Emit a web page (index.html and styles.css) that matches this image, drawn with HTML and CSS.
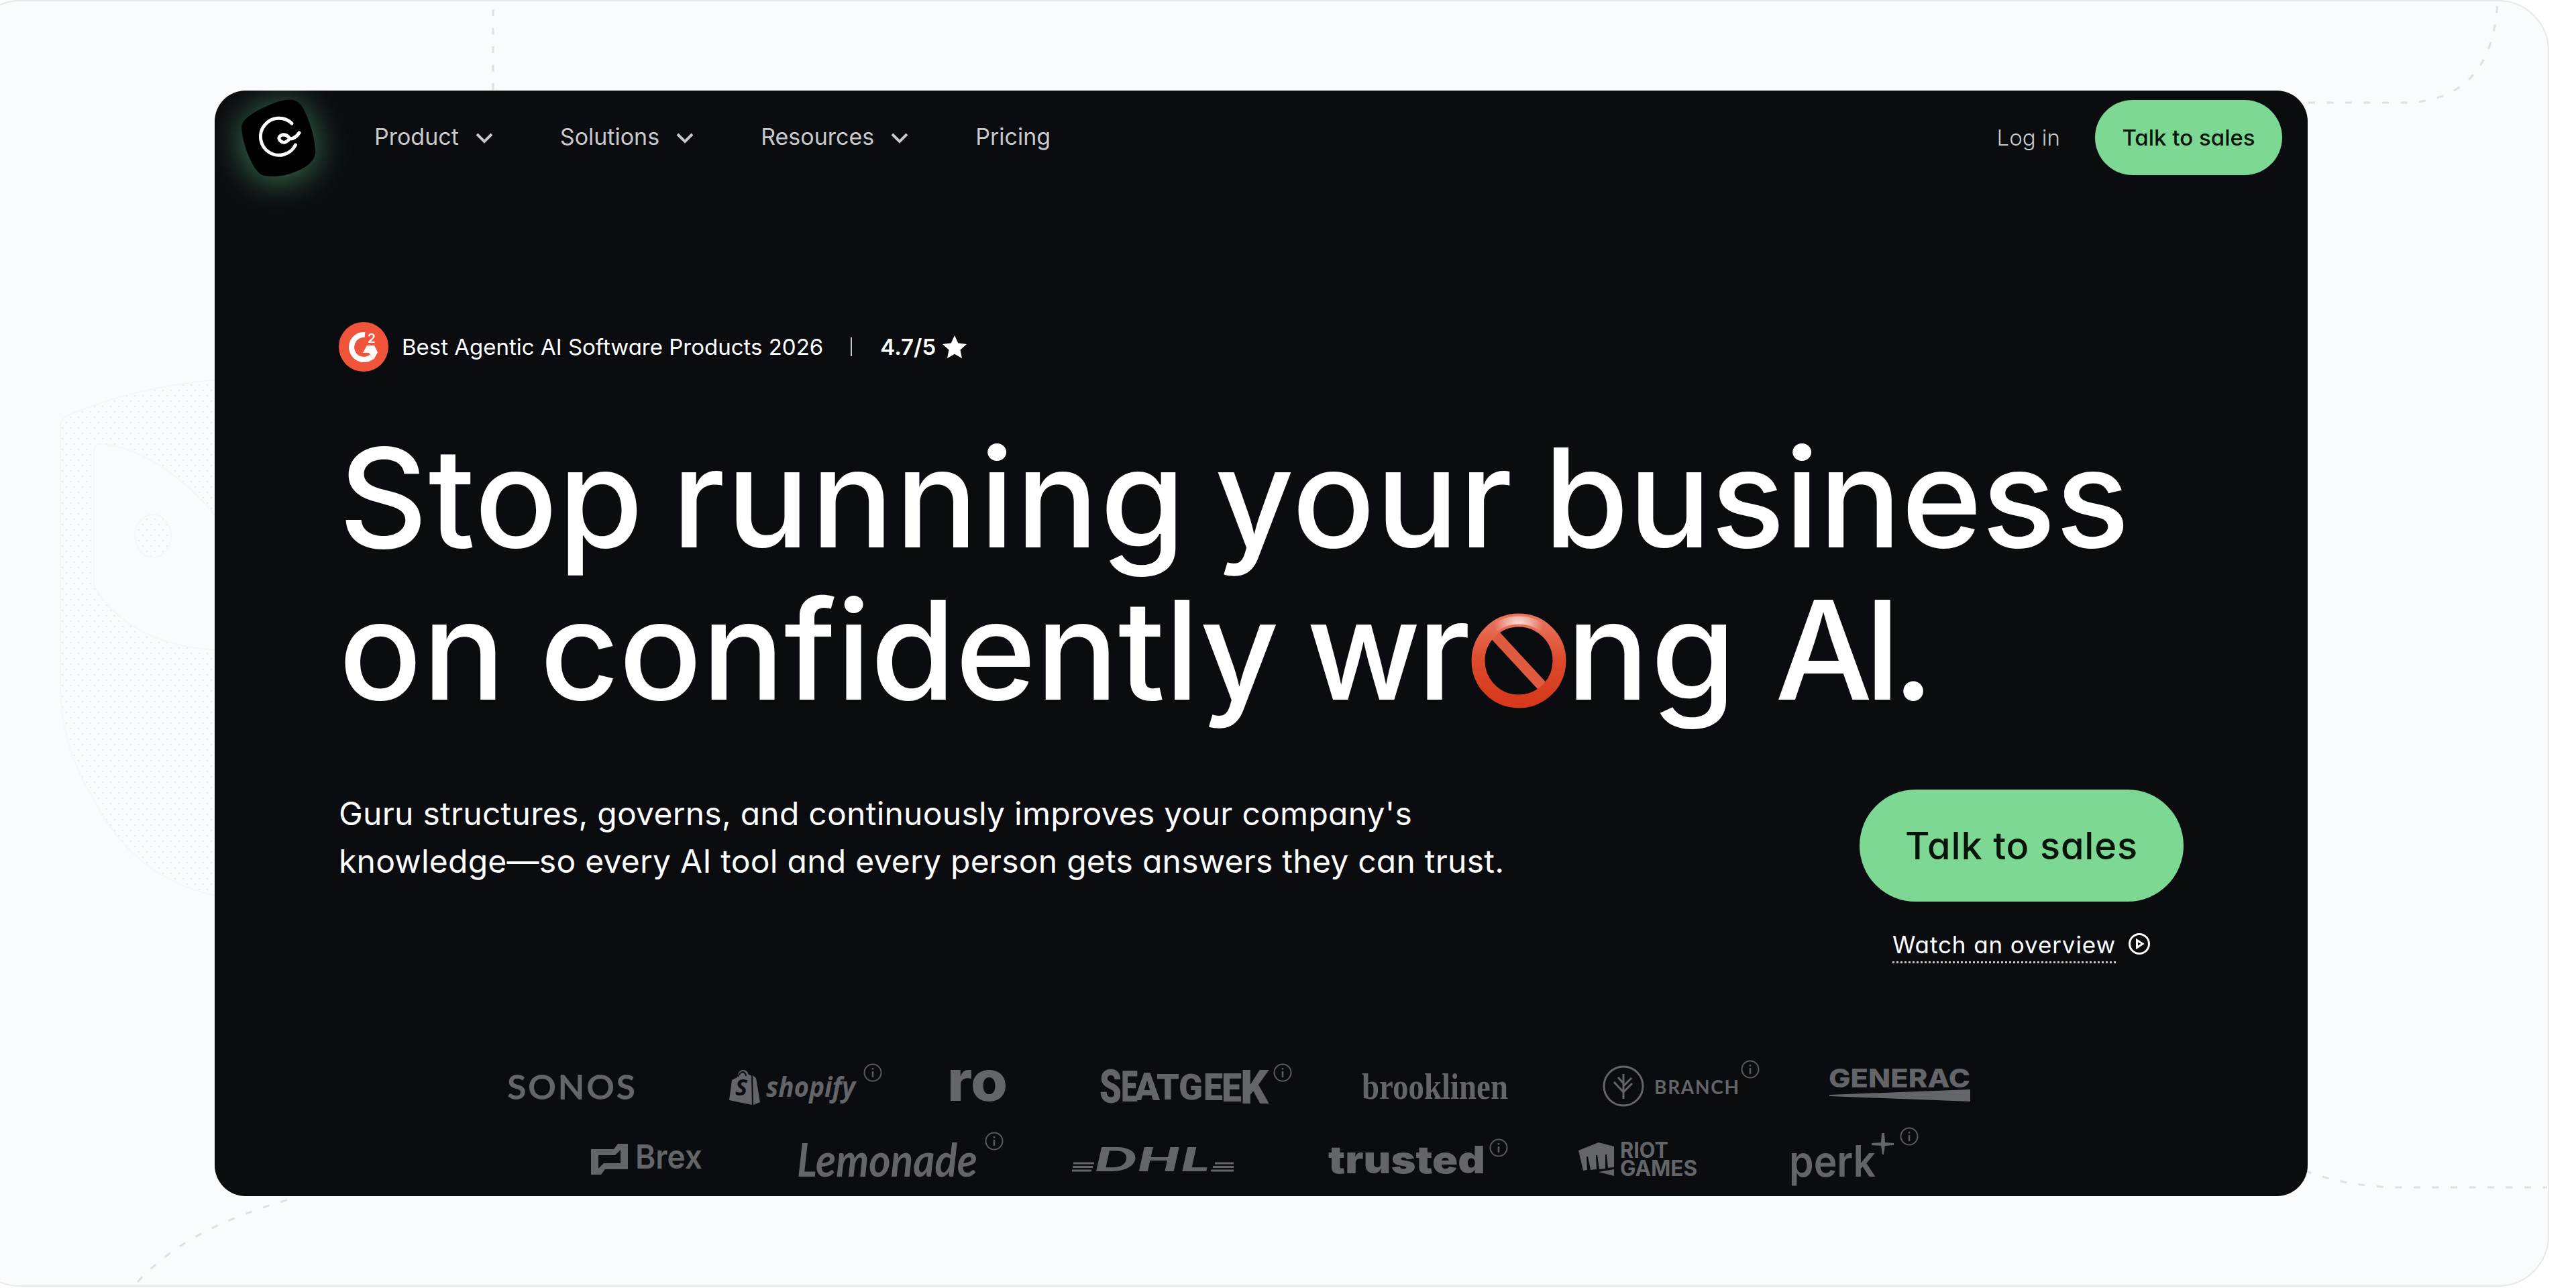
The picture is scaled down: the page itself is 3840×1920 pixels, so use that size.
FILE: index.html
```html
<!DOCTYPE html>
<html lang="en">
<head>
    <meta charset="utf-8">
    <title>Guru</title>
    <link rel="stylesheet" href="styles.css">
</head>
<body>
    <div class="frame">
        <svg class="backdrop" viewBox="0 0 3800 1916" fill="none">
            <defs>
                <pattern id="dots" width="12" height="16" patternUnits="userSpaceOnUse">
                    <circle cx="3" cy="4" r="1.4" fill="#e9ebeb" />
                    <circle cx="9" cy="12" r="1.4" fill="#e9ebeb" />
                </pattern>
            </defs>
            <path d="M90 632Q92 620 104 616Q210 572 330 564V780Q300 735 250 700Q200 664 150 660Q140 660 140 675V870Q190 960 330 968V1335Q200 1310 140 1190Q90 1110 90 1020Z" fill="url(#dots)" stroke="#f5f6f7" stroke-width="2" />
            <ellipse cx="228" cy="797" rx="27" ry="32" fill="url(#dots)" stroke="#f5f6f7" stroke-width="2" />
            <g class="dashes">
                <path d="M735 12V133" />
                <path d="M3441 151H3590Q3716 145 3723 0" />
                <path d="M205 1909C260 1850 330 1816 430 1786" />
                <path d="M3436 1743Q3500 1768 3580 1768H3797" />
            </g>
        </svg>
        <main class="card">
            <header class="nav">
                <svg class="brand" viewBox="0 0 112 116">
                    <path d="M46 8Q80-6 90 10C100 24 112 60 111 82Q108 98 84 108Q56 120 32 114C18 108 2 68 1 42Q2 26 46 8Z" fill="#000" />
                    <path d="M76 37A27.500 27.500 0 1 0 81.500 69M87 51Q81 60 73 60Q69 53 62 54Q56 56 57 60Q60 66 66 65Q71 63 73 59" fill="none" stroke="#fff" stroke-width="5" stroke-linecap="round" />
                </svg>
                <nav class="menu">
                    <a>Product<svg class="chevron" viewBox="0 0 28 20"><path d="M3 4L14 15L25 4" /></svg></a>
                    <a>Solutions<svg class="chevron" viewBox="0 0 28 20"><path d="M3 4L14 15L25 4" /></svg></a>
                    <a>Resources<svg class="chevron" viewBox="0 0 28 20"><path d="M3 4L14 15L25 4" /></svg></a>
                    <a>Pricing</a>
                </nav>
                <a class="login">Log in</a>
                <a class="button button-small">Talk to sales</a>
            </header>

            <section class="hero">
                <div class="award">
                    <svg class="g2" viewBox="0 0 74 74">
                        <circle cx="37" cy="37" r="37" fill="#f0553b" />
                        <path d="M39 19A18.500 18.500 0 1 0 49 52" fill="none" stroke="#fff" stroke-width="8" />
                        <path d="M42 35H53L58 45L52 56L45 46H36Z" fill="#fff" />
                        <text x="43" y="31" class="g2-two">2</text>
                    </svg>
                    <span>Best Agentic AI Software Products 2026</span>
                    <span class="divider"></span>
                    <strong>4.7/5</strong>
                    <svg class="star" viewBox="0 0 36 34"><path d="M18 0L23.300 11.500L36 13L26.500 21.500L29 34L18 27.800L7 34L9.500 21.500L0 13L12.700 11.500Z" fill="#fff" /></svg>
                </div>

                <h1>Stop <span class="loose">running</span> your <span class="tight nudge">business</span><br>on <span class="tight shift">confidently</span> <span class="tighter">wr</span><svg class="banned" viewBox="0 0 142 144">
                        <defs>
                            <linearGradient id="red" x1="0" y1="0" x2="0" y2="1">
                                <stop offset="0" stop-color="#e8735c" />
                                <stop offset=".5" stop-color="#dc4a2c" />
                                <stop offset="1" stop-color="#d8391c" />
                            </linearGradient>
                            <radialGradient id="shine" cx=".5" cy=".08" r=".3">
                                <stop offset="0" stop-color="#fff" stop-opacity=".85" />
                                <stop offset="1" stop-color="#fff" stop-opacity="0" />
                            </radialGradient>
                        </defs>
                        <path d="M35 33L108 112" stroke="#e05a40" stroke-width="16" />
                        <circle cx="71" cy="72" r="60.500" fill="none" stroke="url(#red)" stroke-width="20" />
                        <circle cx="71" cy="72" r="60.500" fill="none" stroke="url(#shine)" stroke-width="12" />
                    </svg><span class="loose">ng</span> <span class="acronym">AI.</span></h1>

                <div class="pitch">
                    <p>Guru structures, governs, and continuously improves your company's<br>knowledge—so every AI tool and every person gets answers they can trust.</p>
                    <div class="actions">
                        <a class="button button-large">Talk to sales</a>
                        <a class="watch"><span>Watch an overview</span><svg viewBox="0 0 34 34"><circle cx="17" cy="17" r="14.500" /><path d="M13.500 11.500L22 17L13.500 22.500Z" /></svg></a>
                    </div>
                </div>
            </section>

            <section class="logos">
                <div class="logo-row">
                    <svg width="191" height="62" class="sonos">
                        <defs>
                            <g id="info">
                                <circle r="12.500" fill="none" stroke="#5a5b5e" stroke-width="2" />
                                <path d="M0-2V7M0-7V-4.500" stroke="#5a5b5e" stroke-width="2.500" />
                            </g>
                        </defs>
                        <text x="0" y="51" textLength="191">SONOS</text>
                    </svg>
                    <svg width="188" height="62" class="shopify">
                        <path d="M4 22L12 18Q14 6 21 7Q27 7 29 14L33 15L34 59L0 52Z" />
                        <path d="M35 15L40 19L46 55L36 59Z" />
                        <path d="M13 17Q17 9 21 10Q25 12 25 16" class="gap" />
                        <text x="9" y="45" class="shopify-s">S</text>
                        <text x="55" y="47" textLength="133" lengthAdjust="spacingAndGlyphs">shopify</text>
                        <use href="#info" x="214" y="11" />
                    </svg>
                    <svg width="85" height="62" class="ro">
                        <text x="-3" y="53" textLength="90" lengthAdjust="spacingAndGlyphs">ro</text>
                    </svg>
                    <svg width="250" height="62" class="seatgeek">
                        <text x="-1" y="56" font-size="70" textLength="33" lengthAdjust="spacingAndGlyphs">S</text>
                        <text x="31" y="54" font-size="64" textLength="25" lengthAdjust="spacingAndGlyphs">E</text>
                        <text x="51" y="52" font-size="57" textLength="38" lengthAdjust="spacingAndGlyphs">A</text>
                        <text x="84" y="51" font-size="54" textLength="34" lengthAdjust="spacingAndGlyphs">T</text>
                        <text x="117" y="51" font-size="54" textLength="36" lengthAdjust="spacingAndGlyphs">G</text>
                        <text x="154" y="52" font-size="56" textLength="29" lengthAdjust="spacingAndGlyphs">E</text>
                        <text x="181" y="54" font-size="60" textLength="30" lengthAdjust="spacingAndGlyphs">E</text>
                        <text x="209" y="57" font-size="70" textLength="42" lengthAdjust="spacingAndGlyphs">K</text>
                        <use href="#info" x="272" y="11" />
                    </svg>
                    <svg width="217" height="62" class="brooklinen">
                        <text x="0" y="50" textLength="218" lengthAdjust="spacingAndGlyphs">brooklinen</text>
                    </svg>
                    <svg width="200" height="62" class="branch">
                        <circle cx="33" cy="31" r="29" />
                        <path d="M33 50V13M33 40L19 25M33 40L46 27M33 27L25 18M33 31L45 19" />
                        <text x="79" y="43" textLength="126">BRANCH</text>
                        <use href="#info" x="222" y="6" />
                    </svg>
                    <svg width="212" height="62" class="generac">
                        <text x="-1" y="33" textLength="211" lengthAdjust="spacingAndGlyphs">GENERAC</text>
                        <path d="M0 44L210 36V54L0 46Z" />
                    </svg>
                </div>
                <div class="logo-row logo-row-last">
                    <svg width="166" height="80" class="brex">
                        <path d="M0 24H34L40 16H55V54H21L15 62H0ZM11 33V53L19 45H44V25L36 33Z" fill-rule="evenodd" />
                        <text x="66" y="53" textLength="100" lengthAdjust="spacingAndGlyphs">Brex</text>
                    </svg>
                    <svg width="269" height="80" class="lemonade">
                        <text x="0" y="65" textLength="269" lengthAdjust="spacingAndGlyphs">Lemonade</text>
                        <use href="#info" x="294" y="12" />
                    </svg>
                    <svg width="241" height="80" class="dhl">
                        <path d="M2 45H33M1 50.500H31M0 56H29M213 45H241M210 50.500H241M207 56H241" />
                        <text x="33" y="57" textLength="172" lengthAdjust="spacingAndGlyphs">DHL</text>
                    </svg>
                    <svg width="232" height="80" class="trusted">
                        <text x="0" y="60" textLength="234" lengthAdjust="spacingAndGlyphs">trusted</text>
                        <use href="#info" x="254" y="22" />
                    </svg>
                    <svg width="177" height="80" class="riot">
                        <path d="M0 26L30 14L53 20V51L44 52L42 32H40V53L31 54L28 33H26L27 54L18 55L14 35H12L13 55L7 56ZM30 58L53 54V64Z" />
                        <text x="62" y="37" textLength="72" lengthAdjust="spacingAndGlyphs">RIOT</text>
                        <text x="62" y="64" textLength="115" lengthAdjust="spacingAndGlyphs">GAMES</text>
                    </svg>
                    <svg width="152" height="80" class="perk">
                        <text x="-4" y="65" textLength="129" lengthAdjust="spacingAndGlyphs">perk</text>
                        <path d="M134 0H138L139 14L152 15V18L139 19L137 32H135L133 19L119 18V15L133 14Z" />
                        <use href="#info" x="175" y="5" />
                    </svg>
                </div>
            </section>
        </main>
    </div>
</body>
</html>
```
FILE: styles.css
```css
body {
    margin: 0;
    background-color: #ffffff;
    font-family: Inter, sans-serif;
    font-feature-settings: "cv11";
    overflow: hidden;
}

.frame {
    position: relative;
    box-sizing: border-box;
    width: 3846px;
    height: 1918px;
    margin-left: -46px;
    padding: 133px 0 0 364px;
    border: 2px solid #e6e8eb;
    border-radius: 76px;
    background-color: #fafbfd;
}

.backdrop {
    position: absolute;
    top: 0;
    left: 44px;
    width: 3800px;
    height: 1916px;
}

.dashes {
    stroke: #dfe0e2;
    stroke-width: 3;
    stroke-dasharray: 10 17.5;
}

.card {
    position: relative;
    width: 3120px;
    height: 1648px;
    border-radius: 46px;
    background-color: #0b0c10;
    color: #ffffff;
    overflow: hidden;
}

.nav {
    display: flex;
    align-items: center;
    height: 140px;
    padding: 0 38px 0 39px;
    font-size: 33px;
    color: #c8c9cb;
}

.brand {
    width: 112px;
    height: 116px;
    filter: drop-shadow(0 5px 26px #4c9a66d0);
}

.menu {
    display: flex;
    flex: 1;
    gap: 99px;
    margin-left: 87px;
    padding-bottom: 3px;
    font-size: 34px;
}

.menu a {
    display: flex;
    align-items: center;
    gap: 24px;
}

.chevron {
    width: 28px;
    height: 20px;
    margin-top: 5px;
    fill: none;
    stroke: #c8c9cb;
    stroke-width: 4;
}

.login {
    margin-right: 52px;
    font-weight: 300;
}

.button {
    display: flex;
    align-items: center;
    justify-content: center;
    border-radius: 90px;
    background-color: #7cd892;
    color: #06140a;
    font-weight: 500;
}

.button-small {
    width: 279px;
    height: 112px;
}

.button-large {
    width: 483px;
    height: 167px;
    font-size: 56px;
    letter-spacing: 0.8px;
}

.hero {
    padding: 205px 185px 0;
}

.award {
    display: flex;
    align-items: center;
    height: 74px;
    font-size: 33px;
}

.g2 {
    width: 74px;
    height: 74px;
    margin-right: 20px;
}

.g2-two {
    font-size: 19px;
    font-weight: 600;
    fill: #ffffff;
}

.award strong {
    font-weight: 600;
}

.divider {
    width: 2px;
    height: 28px;
    margin: 0 42px 0 41px;
    background-color: #c8c9cb;
}

.star {
    width: 36px;
    height: 34px;
    margin-left: 10px;
}

h1 {
    margin: 74px 0 0;
    font-size: 205px;
    font-weight: 500;
    line-height: 227px;
    letter-spacing: 1px;
    word-spacing: -14px;
    white-space: nowrap;
}

.loose {
    letter-spacing: 2.4px;
}

.tight {
    letter-spacing: -0.5px;
}

.tighter {
    letter-spacing: -5px;
}

.shift {
    margin-left: 9px;
}

.nudge {
    margin-left: 4px;
}

.acronym {
    margin-left: 14px;
    letter-spacing: -13px;
}

.banned {
    width: 142px;
    height: 144px;
    margin-left: 6px;
    vertical-align: -14px;
}

.pitch {
    display: flex;
    justify-content: space-between;
    height: 411px;
    margin-top: 95px;
}

p {
    margin: 0;
    font-size: 48px;
    line-height: 71px;
    letter-spacing: 0.25px;
}

.actions {
    display: flex;
    flex-direction: column;
    align-items: center;
}

.watch {
    display: flex;
    gap: 18px;
    margin-top: 39px;
    font-size: 35px;
    line-height: 50px;
    letter-spacing: 0.9px;
}

.watch span {
    border-bottom: 3px dotted #c8c9cb;
}

.watch svg {
    width: 34px;
    height: 34px;
    margin-top: 7px;
    fill: none;
    stroke: #ffffff;
    stroke-width: 3;
}

/* customer logos */
.logos {
    fill: #646568;
}

.logo-row {
    display: flex;
    gap: 140px;
    padding-left: 436px;
}

.logo-row-last {
    gap: 141px;
    margin-top: 39px;
    padding-left: 561px;
}

.logos svg {
    flex: none;
    overflow: visible;
}

.sonos {
    font: 700 52px Lato, sans-serif;
}

.shopify {
    font: italic 700 42px "Open Sans", sans-serif;
}

.shopify .gap {
    fill: none;
    stroke: #0b0c10;
    stroke-width: 2;
}

.shopify-s {
    font-size: 34px;
    fill: #0b0c10;
}

.ro {
    font-size: 84px;
    font-weight: 800;
}

.seatgeek {
    font-family: Roboto, sans-serif;
    font-weight: 900;
}

.brooklinen {
    font: 700 54px "Liberation Serif", serif;
}

.branch {
    font: 700 28px Lato, sans-serif;
}

.branch circle,
.branch > path {
    fill: none;
    stroke: #646568;
    stroke-width: 3;
}

.generac {
    font-size: 38px;
    font-weight: 800;
}

.brex {
    font-size: 50px;
    font-weight: 600;
}

.lemonade {
    font: italic 700 68px Lato, sans-serif;
}

.dhl {
    font: italic 900 49px Lato, sans-serif;
}

.dhl path {
    stroke: #646568;
    stroke-width: 3;
}

.trusted {
    font-size: 56px;
    font-weight: 900;
}

.riot {
    font-size: 32px;
    font-weight: 700;
}

.perk {
    font-size: 64px;
    font-weight: 600;
}
```
